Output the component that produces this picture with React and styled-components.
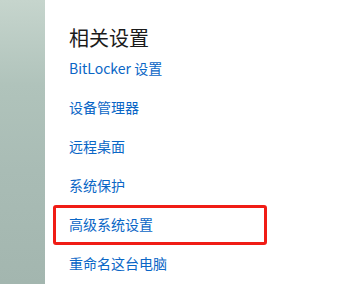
import React from "react";
import styled, { createGlobalStyle } from "styled-components";

const GlobalStyle = createGlobalStyle`
  html, body {
    margin: 0;
    padding: 0;
    background: #ffffff;
  }
  body {
    font-family: "Noto Sans CJK SC", "Noto Sans", sans-serif;
  }
`;

const Page = styled.div`
  display: flex;
  width: 348px;
  height: 284px;
  overflow: hidden;
  background: #ffffff;
`;

const SideStrip = styled.div`
  flex: 0 0 45px;
  background: linear-gradient(180deg, #c6d5cd 0%, #b0c3bb 30%, #a9bcb5 60%, #a3b6af 100%);
`;

const Content = styled.div`
  flex: 1;
  padding: 24px 0 0 24px;
  display: flex;
  flex-direction: column;
`;

const Heading = styled.h2`
  margin: 0;
  font-size: 20px;
  line-height: 28px;
  font-weight: 400;
  color: #1b1b1b;
`;

const LinkList = styled.div`
  margin-top: 6px;
  display: flex;
  flex-direction: column;
  gap: 19px;
`;

const SettingLink = styled.a`
  position: relative;
  display: block;
  font-size: 14px;
  line-height: 20px;
  color: #0a66c6;
  text-decoration: none;
  cursor: pointer;

  &::before {
    content: "";
    display: ${({ $marked }) => ($marked ? "block" : "none")};
    position: absolute;
    top: -9px;
    left: -16px;
    width: 214px;
    height: 40px;
    box-sizing: border-box;
    border: 3px solid #f01c16;
    border-radius: 3px;
  }
`;

const links = [
  { label: "BitLocker 设置" },
  { label: "设备管理器" },
  { label: "远程桌面" },
  { label: "系统保护" },
  { label: "高级系统设置", marked: true },
  { label: "重命名这台电脑" },
];

const App = () => {
  return (
    <>
      <GlobalStyle />
      <Page>
        <SideStrip />
        <Content>
          <Heading>相关设置</Heading>
          <LinkList>
            {links.map((link) => (
              <SettingLink key={link.label} $marked={link.marked}>
                {link.label}
              </SettingLink>
            ))}
          </LinkList>
        </Content>
      </Page>
    </>
  );
};

export default App;
